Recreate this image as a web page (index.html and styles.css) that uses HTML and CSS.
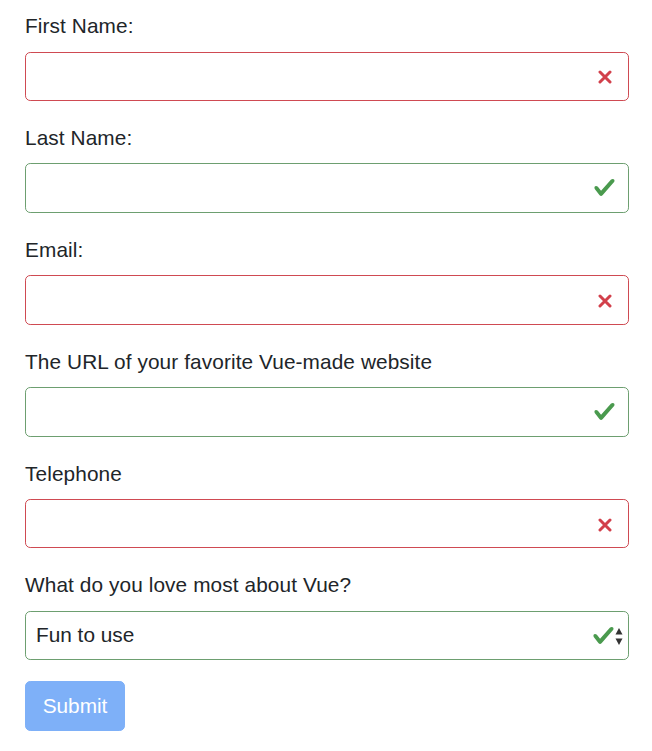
FILE: index.html
```html
<!DOCTYPE html>
<html>
<head>
<meta charset="utf-8">
<link rel="stylesheet" href="styles.css">
</head>
<body>
<form class="form">
  <div class="group">
    <label class="label">First Name:</label>
    <div class="field invalid">
      <input class="input" type="text">
      <svg class="icon icon-x" viewBox="0 0 14 14"><path d="M2 2L12 12M12 2L2 12" stroke="currentColor" stroke-width="3" stroke-linecap="round"/></svg>
    </div>
  </div>
  <div class="group">
    <label class="label">Last Name:</label>
    <div class="field valid">
      <input class="input" type="text">
      <svg class="icon icon-check" viewBox="0 0 8 8"><path fill="currentColor" d="M2.3 6.73L.6 4.53c-.4-1.04.46-1.4 1.1-.8l1.1 1.4 3.4-3.8c.6-.63 1.6-.27 1.2.7l-4 4.6c-.43.5-.8.4-1.1.1z"/></svg>
    </div>
  </div>
  <div class="group">
    <label class="label">Email:</label>
    <div class="field invalid">
      <input class="input" type="text">
      <svg class="icon icon-x" viewBox="0 0 14 14"><path d="M2 2L12 12M12 2L2 12" stroke="currentColor" stroke-width="3" stroke-linecap="round"/></svg>
    </div>
  </div>
  <div class="group">
    <label class="label">The URL of your favorite Vue-made website</label>
    <div class="field valid">
      <input class="input" type="text">
      <svg class="icon icon-check" viewBox="0 0 8 8"><path fill="currentColor" d="M2.3 6.73L.6 4.53c-.4-1.04.46-1.4 1.1-.8l1.1 1.4 3.4-3.8c.6-.63 1.6-.27 1.2.7l-4 4.6c-.43.5-.8.4-1.1.1z"/></svg>
    </div>
  </div>
  <div class="group">
    <label class="label">Telephone</label>
    <div class="field invalid">
      <input class="input" type="text">
      <svg class="icon icon-x" viewBox="0 0 14 14"><path d="M2 2L12 12M12 2L2 12" stroke="currentColor" stroke-width="3" stroke-linecap="round"/></svg>
    </div>
  </div>
  <div class="group">
    <label class="label">What do you love most about Vue?</label>
    <div class="field valid">
      <div class="input select">Fun to use</div>
      <svg class="icon icon-check icon-check-select" viewBox="0 0 8 8"><path fill="currentColor" d="M2.3 6.73L.6 4.53c-.4-1.04.46-1.4 1.1-.8l1.1 1.4 3.4-3.8c.6-.63 1.6-.27 1.2.7l-4 4.6c-.43.5-.8.4-1.1.1z"/></svg>
      <svg class="arrows" viewBox="0 0 8 19"><path d="M4 1L7.5 7.5H0.5Z" fill="#333"/><path d="M4 18L7.5 11.5H0.5Z" fill="#333"/></svg>
    </div>
  </div>
  <button class="submit" type="button">Submit</button>
</form>
</body>
</html>
```
FILE: styles.css
```css
html, body {
  margin: 0;
  padding: 0;
  background: #fff;
}
body {
  font-family: "Liberation Sans", Arial, sans-serif;
  font-size: 20.8px;
  color: #212529;
}
.form {
  padding: 10px 23px 0 25px;
}
.group {
  margin-bottom: 20.9px;
}
.label {
  display: block;
  line-height: 31.2px;
  margin-bottom: 10.4px;
  letter-spacing: 0.1px;
}
.field {
  position: relative;
}
.input {
  display: block;
  box-sizing: border-box;
  width: 100%;
  height: 49.4px;
  margin: 0;
  padding: 0 52px 0 10px;
  font: inherit;
  color: #212529;
  background: #fff;
  border: 1.3px solid #ced4da;
  border-radius: 5.2px;
  outline: none;
}
.select {
  line-height: 46.8px;
}
.invalid .input {
  border-color: #cf4a52;
}
.valid .input {
  border-color: #6d9f70;
}
.icon {
  position: absolute;
  top: 50%;
}
.icon-x {
  width: 14px;
  height: 14px;
  right: 17px;
  margin-top: -6px;
  color: #d2404b;
}
.icon-check {
  width: 23px;
  height: 23px;
  right: 13px;
  margin-top: -12px;
  color: #4a9a4e;
}
.icon-check-select {
  right: 14px;
}
.arrows {
  position: absolute;
  top: 50%;
  right: 6px;
  width: 8px;
  height: 19px;
  margin-top: -9px;
}
.submit {
  display: block;
  width: 100px;
  height: 49.4px;
  margin: 0;
  padding: 0;
  font: inherit;
  color: #fff;
  background: #7eb0f8;
  border: 1.3px solid #7eb0f8;
  border-radius: 5.2px;
}
```
